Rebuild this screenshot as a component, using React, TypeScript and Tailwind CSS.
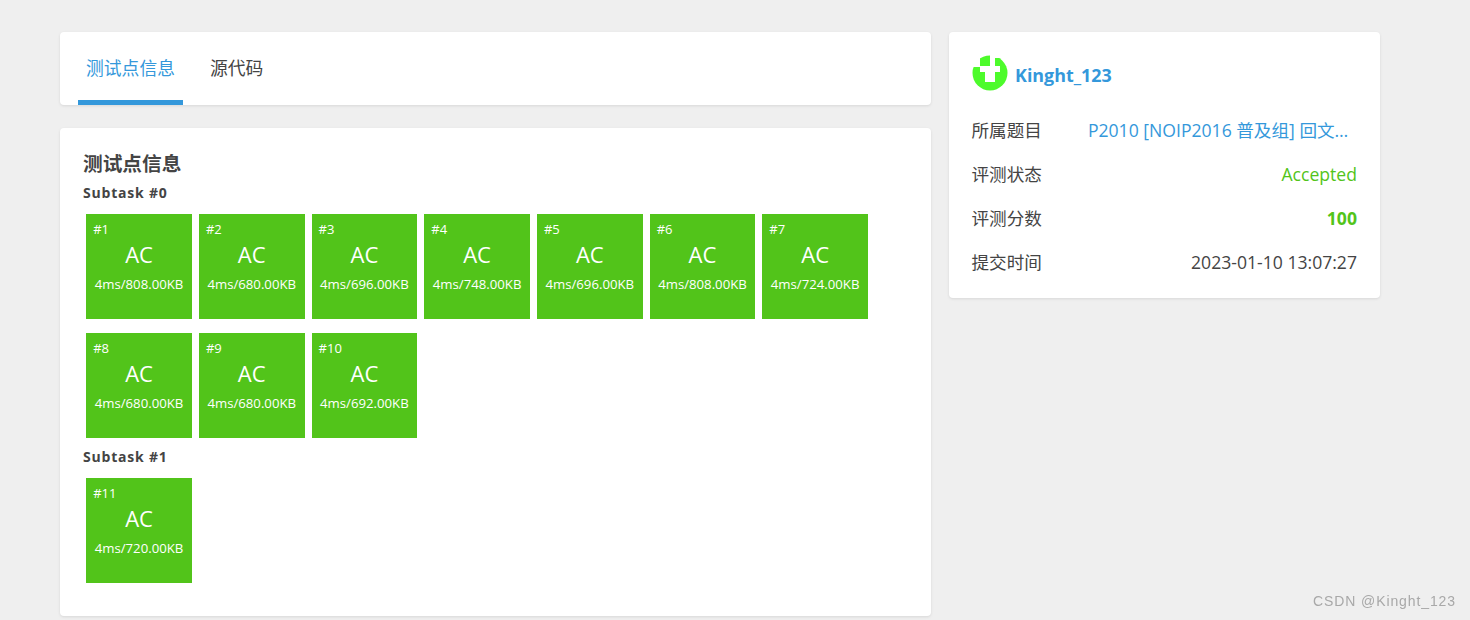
import React from 'react';

const font = { fontFamily: '"Open Sans", "Noto Sans CJK SC", sans-serif' };

const subtasks = [
  {
    name: 'Subtask #0',
    cases: [
      ['#1', '4ms/808.00KB'],
      ['#2', '4ms/680.00KB'],
      ['#3', '4ms/696.00KB'],
      ['#4', '4ms/748.00KB'],
      ['#5', '4ms/696.00KB'],
      ['#6', '4ms/808.00KB'],
      ['#7', '4ms/724.00KB'],
      ['#8', '4ms/680.00KB'],
      ['#9', '4ms/680.00KB'],
      ['#10', '4ms/692.00KB']
    ]
  },
  {
    name: 'Subtask #1',
    cases: [['#11', '4ms/720.00KB']]
  }
];

function Avatar() {
  return <svg width="36" height="36" viewBox="0 0 36 36" className="shrink-0 ml-[0.5px]" shapeRendering="crispEdges">
      <circle cx="18" cy="18" r="17.5" fill="#4dfb2b" shapeRendering="auto" />
      <path d="M0 0h8v12h-8zM18 0h5v27h-5zM8 11h20v6h-20zM13 17h5v10h-5zM23 0h13v3h-13z" fill="#fff" />
    </svg>;
}

function CaseTile({
  id,
  usage
}: {
  id: string;
  usage: string;
}) {
  return <div className="w-[105.7px] h-[105px] bg-[#52c41a] text-white flex flex-col items-center relative">
      <span className="absolute left-[7px] top-[6px] text-[13px] leading-[18px] font-medium">{id}</span>
      <span className="mt-[25px] text-[22px] leading-[30px]">AC</span>
      <span className="mt-[6px] text-[13.2px] leading-[18px] font-medium whitespace-nowrap">{usage}</span>
    </div>;
}

function InfoRow({
  label,
  children
}: {
  label: string;
  children: React.ReactNode;
}) {
  return <div className="flex justify-between items-center h-[44px] text-[17.6px]">
      <span className="text-[#444] shrink-0">{label}</span>
      {children}
    </div>;
}

export default function App() {
  return <div style={font} className="h-[620px] overflow-hidden bg-[#efefef] pt-[32px] pl-[60px] flex gap-[18px] text-[#444]">
      <div className="w-[871px] flex flex-col gap-[23px]">
        <div className="h-[73px] bg-white rounded shadow-[0_1px_3px_rgba(0,0,0,0.1)] flex pl-[18px]">
          <div className="w-[105px] h-full border-b-[5px] border-[#3498db] text-[#3498db] text-[17.8px] flex justify-center pt-[22px] leading-[28px]">
            测试点信息
          </div>
          <div className="ml-[27px] text-[17.8px] pt-[22px] leading-[28px]">源代码</div>
        </div>
        <div className="h-[488px] bg-white rounded shadow-[0_1px_3px_rgba(0,0,0,0.1)] pl-[23px] pt-[21px]">
          <h2 className="text-[19.7px] leading-[30px] font-bold">测试点信息</h2>
          {subtasks.map(task => <div key={task.name}>
              <div className="text-[14px] leading-[20px] font-bold mt-[4px] tracking-[0.8px]">{task.name}</div>
              <div className="flex flex-wrap gap-x-[7px] gap-y-[14px] pl-[3.2px] pt-[11px] pb-[5px] w-[800px]">
                {task.cases.map(c => <CaseTile key={c[0]} id={c[0]} usage={c[1]} />)}
              </div>
            </div>)}
        </div>
      </div>
      <div className="w-[431px] h-[266px] bg-white rounded shadow-[0_1px_3px_rgba(0,0,0,0.1)] pl-[22.5px] pr-[23px] pt-[23px]">
        <div className="flex items-center gap-[7px] h-[36px] mb-[17px]">
          <Avatar />
          <span className="text-[#3498db] font-bold text-[17.9px] relative top-[2px]">Kinght_123</span>
        </div>
        <InfoRow label="所属题目">
          <span className="text-[#3498db] ml-[46px] pr-[5px] truncate">P2010 [NOIP2016 普及组] 回文日期</span>
        </InfoRow>
        <InfoRow label="评测状态">
          <span className="text-[#52c41a]">Accepted</span>
        </InfoRow>
        <InfoRow label="评测分数">
          <span className="text-[#52c41a] font-bold">100</span>
        </InfoRow>
        <InfoRow label="提交时间">
          <span>2023-01-10 13:07:27</span>
        </InfoRow>
      </div>
      <span style={{ fontFamily: '"Liberation Sans", sans-serif' }} className="fixed right-[14px] top-[592px] text-[14px] leading-[18px] tracking-[0.9px] text-[#a8a8a8]">
        CSDN @Kinght_123
      </span>
    </div>;
}
